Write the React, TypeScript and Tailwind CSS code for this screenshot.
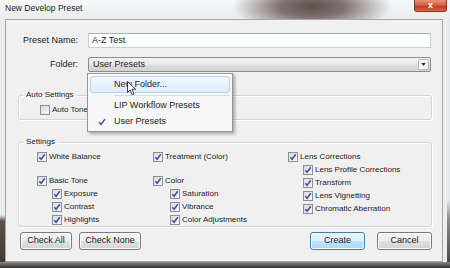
type ItemProps = { label: string; on?: boolean };

function Box({ on = true }: { on?: boolean }) {
  return (
    <span className="flex h-[10px] w-[10px] shrink-0 items-center justify-center border border-[#8e8f8f] bg-[linear-gradient(135deg,#d6dbe4,#f7f8fa)]">
      {on && (
        <svg viewBox="0 0 8 8" className="h-[8px] w-[8px]">
          <path d="M1.3 4.2 L3.1 6.3 L6.8 1.2" fill="none" stroke="#3b4fa8" strokeWidth="1.5" />
        </svg>
      )}
    </span>
  );
}

function Item({ label, on = true }: ItemProps) {
  return (
    <div className="flex h-[13px] items-center gap-[2px] whitespace-nowrap text-[8px]">
      <Box on={on} />
      <span>{label}</span>
    </div>
  );
}

const btn =
  "flex h-[18px] items-center justify-center rounded-[3px] border text-[9px] shadow-[inset_0_0_0_1px_#fbfbfb]";
const grey =
  "border-[#7a7a7a] bg-[linear-gradient(to_bottom,#f4f4f4_0%,#ececec_50%,#e0e0e0_51%,#d4d4d4_100%)]";
const blue =
  "border-[#3c7fb1] bg-[linear-gradient(to_bottom,#eaf6fd_0%,#d9f0fc_50%,#bee6fd_51%,#a7d9f5_100%)]";

export default function App() {
  return (
    <div className="flex h-[268px] w-[450px] flex-col overflow-hidden bg-[#e9ecef] font-['Liberation_Sans',Arial,sans-serif] text-[#1b1b1b]">
      {/* title bar */}
      <div className="flex h-[19px] items-start justify-between bg-[radial-gradient(ellipse_80px_26px_at_312px_7px,#5f4f4b_0%,#7f7270_40%,rgba(236,239,242,0)_100%),linear-gradient(to_bottom,#f7f8fa,#e9ecef)]">
        <span className="pl-[5px] pt-[3px] text-[8.5px] leading-[11px]">New Develop Preset</span>
        <div className="mr-[3px] flex h-[12px] w-[33px] items-center justify-center rounded-b-[3px] border border-t-0 border-[#8a3a2a] bg-[linear-gradient(to_bottom,#e7937c_0%,#d3583c_50%,#c23d22_60%,#d8674b_100%)] text-[9px] font-bold leading-none text-white">
          x
        </div>
      </div>

      <div className="flex h-[243px]">
        <div className="w-[5px] bg-[linear-gradient(to_bottom,#e9ecef_0,#e9ecef_196px,#5f4d47_202px,#463936_100%)]" />

        {/* dialog body */}
        <div className="relative flex w-[438px] flex-col border border-[#a7a7a7] bg-[#f0f0f0] pt-[13px]">
          <div className="flex h-[15px] items-center">
            <span className="w-[72px] text-right text-[9px]">Preset Name:</span>
            <div className="ml-[10px] flex h-[15px] w-[343px] items-center border border-[#c3d1de] border-t-[#9fb3c8] bg-white pl-[3px] text-[9px]">
              A-Z Test
            </div>
          </div>

          <div className="mt-[9px] flex h-[15px] items-center">
            <span className="w-[72px] text-right text-[9px]">Folder:</span>
            <div className="ml-[10px] flex h-[15px] w-[343px] items-center justify-between rounded-[2px] border border-[#8d8d8d] bg-[linear-gradient(to_bottom,#f4f4f4_0%,#e9e9e9_50%,#dcdcdc_51%,#d2d2d2_100%)] pl-[4px] text-[9px]">
              <span>User Presets</span>
              <span className="mr-[1px] flex h-[11px] w-[11px] items-center justify-center rounded-[2px] border border-[#b8b8b8] bg-[#f7f7f7]">
                <svg viewBox="0 0 6 4" className="h-[3px] w-[5px]">
                  <path d="M0 0 L6 0 L3 4 Z" fill="#333" />
                </svg>
              </span>
            </div>
          </div>

          <fieldset className="ml-[12px] mt-[18px] w-[414px] rounded-[3px] border border-[#d5d5d5] shadow-[inset_1px_1px_0_#fff,1px_1px_0_#fff]">
            <legend className="ml-[4px] px-[3px] text-[8px] leading-[10px]">Auto Settings</legend>
            <div className="flex h-[19px] items-center pl-[21px]">
              <Item label="Auto Tone" on={false} />
            </div>
          </fieldset>

          <fieldset className="ml-[12px] mt-[17px] w-[414px] rounded-[3px] border border-[#d5d5d5] shadow-[inset_1px_1px_0_#fff,1px_1px_0_#fff]">
            <legend className="ml-[4px] px-[3px] text-[8px] leading-[10px]">Settings</legend>
            <div className="flex pl-[18px] pt-[3px]">
              <div className="flex w-[116px] flex-col">
                <Item label="White Balance" />
                <div className="h-[11px]" />
                <Item label="Basic Tone" />
                <div className="flex flex-col pl-[15px]">
                  <Item label="Exposure" />
                  <Item label="Contrast" />
                  <Item label="Highlights" />
                </div>
              </div>
              <div className="flex w-[135px] flex-col">
                <Item label="Treatment (Color)" />
                <div className="h-[11px]" />
                <Item label="Color" />
                <div className="flex flex-col pl-[17px]">
                  <Item label="Saturation" />
                  <Item label="Vibrance" />
                  <Item label="Color Adjustments" />
                </div>
              </div>
              <div className="flex flex-col">
                <Item label="Lens Corrections" />
                <div className="flex flex-col pl-[15px]">
                  <Item label="Lens Profile Corrections" />
                  <Item label="Transform" />
                  <Item label="Lens Vignetting" />
                  <Item label="Chromatic Aberration" />
                </div>
              </div>
            </div>
          </fieldset>

          <div className="mt-[5px] flex items-start pl-[14px] pr-[10px]">
            <div className={`${btn} ${grey} w-[52px]`}>Check All</div>
            <div className={`${btn} ${grey} ml-[7px] w-[62px]`}>Check None</div>
            <div className={`${btn} ${blue} ml-auto w-[55px]`}>Create</div>
            <div className={`${btn} ${grey} ml-[12px] w-[55px]`}>Cancel</div>
          </div>

          {/* open folder menu */}
          <div className="absolute left-[81px] top-[53px] flex h-[59px] w-[146px] flex-col border border-[#979797] bg-[#f7f7f7] px-[2px] pt-[2px] text-[9px] shadow-[2px_2px_3px_rgba(0,0,0,0.3)]">
            <div className="flex h-[17px] items-center rounded-[3px] border border-[#b6d3f2] bg-[linear-gradient(to_bottom,#f2f8fe,#dfecfb)] pl-[23px]">
              New Folder...
            </div>
            <div className="ml-[24px] mt-[2px] h-px bg-[#d9d9d9]" />
            <div className="mt-[2px] flex h-[16px] items-center pl-[24px]">LIP Workflow Presets</div>
            <div className="flex h-[16px] items-center">
              <span className="flex w-[24px] justify-center">
                <svg viewBox="0 0 8 8" className="h-[8px] w-[8px]">
                  <path d="M1 4.3 L3 6.5 L7 1.2" fill="none" stroke="#2f4a9e" strokeWidth="1.4" />
                </svg>
              </span>
              User Presets
            </div>
          </div>

          {/* mouse pointer */}
          <svg viewBox="0 0 10 15" className="absolute left-[121px] top-[61px] h-[15px] w-[10px]">
            <path d="M0.5 0.5 L0.5 11.5 L3.2 9 L5.2 13.8 L7 13 L5 8.3 L8.7 8.3 Z" fill="#fff" stroke="#111" strokeWidth="0.8" />
          </svg>
        </div>

        <div className="flex w-[7px]">
          <div className="w-[4px] bg-[#eceef1]" />
          <div className="w-[3px] bg-[linear-gradient(to_bottom,#e6e9ec_0,#e6e9ec_180px,#8c8c8c_200px,#4a4a4a_100%)]" />
        </div>
      </div>

      <div className="h-[6px] bg-[linear-gradient(to_bottom,#8a8a8a,#2e2a29)]" />
    </div>
  );
}
